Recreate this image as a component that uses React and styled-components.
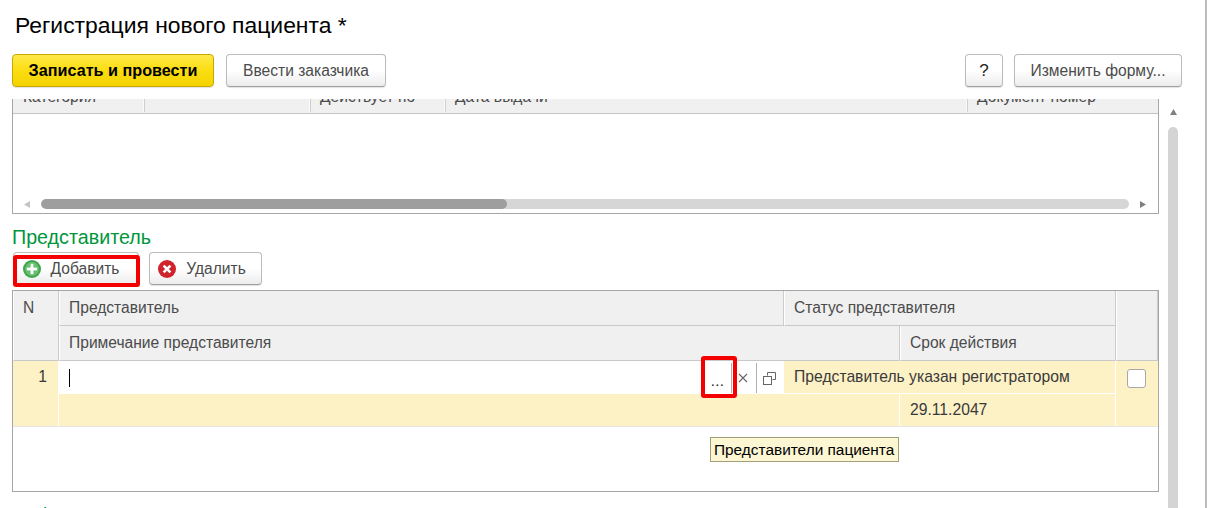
import React from "react";
import styled, { createGlobalStyle } from "styled-components";

const Global = createGlobalStyle`
  html, body {
    margin: 0;
    padding: 0;
    background: #fff;
    overflow: hidden;
    font-family: "Liberation Sans", Arial, sans-serif;
  }
  * { box-sizing: border-box; }
`;

const Window = styled.div`
  width: 1207px;
  height: 508px;
  overflow: hidden;
  display: flex;
  border-right: 2px solid #bcbcbc;
`;

const Main = styled.div`
  width: 1158px;
  margin-left: 12px;
  flex: none;
`;

const Title = styled.h1`
  margin: 0;
  height: 54px;
  padding: 12px 0 0 3px;
  font-size: 22.9px;
  line-height: 26px;
  font-weight: 400;
  color: #000;
`;

const Toolbar = styled.div`
  display: flex;
  gap: ${(p) => p.$gap || 12}px;
  height: 33px;
  width: ${(p) => p.$width || 1170}px;
`;

const Spacer = styled.div`
  flex: 1;
`;

const Button = styled.div`
  height: 33px;
  width: ${(p) => p.$width}px;
  flex: none;
  display: flex;
  align-items: center;
  justify-content: center;
  gap: ${(p) => p.$iconGap || 0}px;
  padding-right: ${(p) => p.$shift || 0}px;
  border: 1px solid #bcbcbc;
  border-bottom-color: #a0a0a0;
  border-radius: 4px;
  background: linear-gradient(#ffffff 0%, #ffffff 50%, #ececec 100%);
  box-shadow: 0 1px 1px rgba(0, 0, 0, 0.12);
  font-size: 15.6px;
  color: #4b4b4b;
  white-space: nowrap;
`;

const PrimaryButton = styled(Button)`
  border-color: #c8a900;
  background: linear-gradient(#ffe94a 0%, #fbdd10 50%, #f3d200 100%);
  color: #000;
  font-size: 16.2px;
  font-weight: 700;
`;

const HelpButton = styled(Button)`
  margin-right: -1px;
  color: #222;
  font-size: 17px;
`;

const Table = styled.div`
  width: 1147px;
  height: ${(p) => p.$height}px;
  border: 1px solid #a6a6a6;
  background: #fff;
`;

const ClippedTable = styled(Table)`
  margin-top: 12px;
  border-top: 0;
  display: flex;
  flex-direction: column;
`;

const ClippedHead = styled.div`
  display: grid;
  grid-template-columns: 131px 166px 135px 522px 1fr;
  height: 15px;
  background: #f0f0f0;
  border-bottom: 1px solid #c4c4c4;
  overflow: hidden;
`;

const ClippedCell = styled.div`
  height: 23px;
  border-right: ${(p) => (p.$last ? "0" : "1px solid #fafafa")};
  box-shadow: ${(p) => (p.$last ? "none" : "1px 0 0 #cfcfcf")};
  padding-left: 10px;
  font-size: 15.6px;
  line-height: 16px;
  color: #4b4b4b;
  white-space: nowrap;
  transform: translateY(-10px);
`;

const TableFill = styled.div`
  flex: 1;
`;

const HScroll = styled.div`
  height: 23px;
  display: flex;
  align-items: center;
  padding: 5px 0 0 7px;
`;

const ArrowBox = styled.div`
  width: 12px;
  flex: none;
  display: flex;
  justify-content: center;
`;

const ScrollTrack = styled.div`
  width: 1088px;
  margin: 0 7px 0 9px;
  height: 10px;
  border-radius: 5px;
  background: #d6d6d6;
  overflow: hidden;
`;

const ScrollThumb = styled.div`
  height: 10px;
  border-radius: 5px;
  background: #9e9e9e;
`;

const Section = styled.div`
  height: 23px;
  margin-top: 12px;
  font-size: 19.7px;
  line-height: 23px;
  color: #00963c;
  white-space: nowrap;
`;

const CommandBar = styled(Toolbar)`
  margin: 3px 0 5px 1px;
`;

const Highlighted = styled.div`
  position: relative;
`;

const RedFrame = styled.div`
  position: absolute;
  border: 4px solid #f40000;
  border-radius: 3px;
  pointer-events: none;
  left: ${(p) => p.$left}px;
  top: ${(p) => p.$top}px;
  width: ${(p) => p.$width}px;
  height: ${(p) => p.$height}px;
`;

const Grid = styled.div`
  display: grid;
  grid-template-columns: 46px 725px 116px 216px 1fr;
  grid-template-rows: 35px 35px 33px 32px;
  border-bottom: 1px solid #e6e6e6;
`;

const HeadCell = styled.div`
  grid-column: ${(p) => p.$col};
  grid-row: ${(p) => p.$row};
  background: #f0f0f0;
  border-left: 1px solid #fff;
  border-right: 1px solid #cbcbcb;
  border-bottom: 1px solid #c8c8c8;
  padding: 9px 0 0 9px;
  font-size: 15.6px;
  line-height: 16px;
  color: #4b4b4b;
  white-space: nowrap;
`;

const RowCell = styled.div`
  grid-column: ${(p) => p.$col};
  grid-row: ${(p) => p.$row};
  background: #fdf1c6;
  border-right: ${(p) => (p.$flush ? "0" : "1px solid #fff")};
  border-bottom: ${(p) => (p.$line ? "1px solid #fff" : "0")};
  padding: 8px 0 0 10px;
  font-size: 15.7px;
  line-height: 16px;
  color: #3a3a3a;
  white-space: nowrap;
`;

const NumberCell = styled(RowCell)`
  padding: 8px 11px 0 0;
  text-align: right;
`;

const CheckCell = styled(RowCell)`
  padding: 8px 0 0 11px;
`;

const CheckBox = styled.div`
  width: 19px;
  height: 19px;
  background: #fff;
  border: 1px solid #a8a8a8;
  border-radius: 3px;
`;

const Input = styled.div`
  grid-column: ${(p) => p.$col};
  grid-row: ${(p) => p.$row};
  background: #fff;
  display: flex;
  align-items: stretch;
  padding: 2px 0 1px 10px;
  height: 33px;
`;

const Caret = styled.div`
  width: 1px;
  height: 18px;
  margin-top: 6px;
  background: #000;
`;

const InputGrow = styled.div`
  flex: 1;
`;

const InputBtn = styled.div`
  width: ${(p) => p.$width}px;
  flex: none;
  border-right: ${(p) => (p.$sep ? "1px solid #b0b0b0" : "0")};
  padding-right: ${(p) => p.$shift || 0}px;
  display: flex;
  align-items: center;
  justify-content: center;
  color: #555;
`;

const Dots = styled.span`
  font-size: 15px;
  line-height: 14px;
  letter-spacing: 0.3px;
  margin: 5px 0 0 5px;
  color: #222;
`;

const Tooltip = styled.div`
  position: absolute;
  left: 698px;
  top: 147px;
  width: 189px;
  height: 25px;
  background: #fdf6d3;
  border: 1px solid #a09f7a;
  font-size: 15.4px;
  line-height: 23px;
  padding-left: 3px;
  color: #000;
  white-space: nowrap;
`;

const VScroll = styled.div`
  width: 10px;
  margin: 99px 0 0 -2px;
  flex: none;
  display: flex;
  flex-direction: column;
  align-items: center;
`;

const VArrow = styled.div`
  height: 28px;
  display: flex;
  padding-top: 10px;
`;

const VThumb = styled.div`
  width: 10px;
  flex: 1;
  background: #d4d4d4;
  border-radius: 5px 5px 0 0;
`;

const NextSection = styled(Section)`
  margin-top: 12px;
`;

const Arrow = ({ dir, color = "#9a9a9a" }) => {
  const points = {
    left: "7,0 7,7 1,3.5",
    right: "1,0 1,7 7,3.5",
    up: "0,6 7,6 3.5,0",
  }[dir];
  return (
    <svg width="7" height="7" viewBox="0 0 7 7">
      <polygon points={points} fill={color} />
    </svg>
  );
};

const PlusIcon = () => (
  <svg width="18" height="18" viewBox="0 0 18 18">
    <circle cx="9" cy="9" r="9" fill="#3fa64a" />
    <circle cx="9" cy="9" r="7" fill="#66c06c" />
    <rect x="3.8" y="7.6" width="10.4" height="2.8" fill="#fff" />
    <rect x="7.6" y="3.8" width="2.8" height="10.4" fill="#fff" />
  </svg>
);

const RemoveIcon = () => (
  <svg width="18" height="18" viewBox="0 0 18 18">
    <circle cx="9" cy="9" r="9" fill="#d0242c" />
    <path d="M5.6 5.6l6.8 6.8M12.4 5.6l-6.8 6.8" stroke="#fff" strokeWidth="2.6" />
  </svg>
);

const ClearIcon = () => (
  <svg width="10" height="10" viewBox="0 0 10 10">
    <path d="M1 1l8 8M9 1l-8 8" stroke="#666" strokeWidth="1.1" fill="none" />
  </svg>
);

const OpenIcon = () => (
  <svg width="13" height="13" viewBox="0 0 13 13" fill="none" stroke="#666">
    <path d="M4.5 3.5V.5h8v7h-3" />
    <rect x="0.5" y="4.5" width="8" height="8" fill="#fff" />
  </svg>
);

export default function App() {
  return (
    <Window>
      <Global />
      <Main>
        <Title>Регистрация нового пациента *</Title>
        <Toolbar>
          <PrimaryButton $width={202}>Записать и провести</PrimaryButton>
          <Button $width={160}>Ввести заказчика</Button>
          <Spacer />
          <HelpButton $width={38}>?</HelpButton>
          <Button $width={168}>Изменить форму...</Button>
        </Toolbar>

        <ClippedTable $height={115}>
          <ClippedHead>
            <ClippedCell>Категория</ClippedCell>
            <ClippedCell />
            <ClippedCell>Действует по</ClippedCell>
            <ClippedCell>Дата выдачи</ClippedCell>
            <ClippedCell $last>Документ номер</ClippedCell>
          </ClippedHead>
          <TableFill />
          <HScroll>
            <ArrowBox><Arrow dir="left" color="#c4c4c4" /></ArrowBox>
            <ScrollTrack>
              <ScrollThumb style={{ width: `${(466 / 1088) * 100}%` }} />
            </ScrollTrack>
            <ArrowBox><Arrow dir="right" color="#808080" /></ArrowBox>
          </HScroll>
        </ClippedTable>

        <Section>Представитель</Section>
        <CommandBar $gap={10}>
          <Highlighted>
            <Button $width={126} $iconGap={10} $shift={10}><PlusIcon />Добавить</Button>
            <RedFrame $left={0} $top={3} $width={127} $height={32} />
          </Highlighted>
          <Button $width={113} $iconGap={10} $shift={7}><RemoveIcon />Удалить</Button>
        </CommandBar>

        <Highlighted>
          <Table $height={202}>
            <Grid>
              <HeadCell $col="1" $row="1 / 3">N</HeadCell>
              <HeadCell $col="2" $row="1">Представитель</HeadCell>
              <HeadCell $col="3 / 5" $row="1">Статус представителя</HeadCell>
              <HeadCell $col="5" $row="1 / 3" />
              <HeadCell $col="2 / 4" $row="2">Примечание представителя</HeadCell>
              <HeadCell $col="4" $row="2">Срок действия</HeadCell>

              <NumberCell $col="1" $row="3 / 5">1</NumberCell>
              <Input $col="2" $row="3">
                <Caret />
                <InputGrow />
                <InputBtn $width={33} $sep><Dots>...</Dots></InputBtn>
                <InputBtn $width={25} $sep $shift={2}><ClearIcon /></InputBtn>
                <InputBtn $width={27} $shift={3}><OpenIcon /></InputBtn>
              </Input>
              <RowCell $col="3 / 5" $row="3" $line>Представитель указан регистратором</RowCell>
              <CheckCell $col="5" $row="3 / 5" $flush><CheckBox /></CheckCell>
              <RowCell $col="2 / 4" $row="4" />
              <RowCell $col="4" $row="4">29.11.2047</RowCell>
            </Grid>
          </Table>
          <RedFrame $left={689} $top={66} $width={36} $height={42} />
          <Tooltip>Представители пациента</Tooltip>
        </Highlighted>

        <NextSection>Информация</NextSection>
      </Main>
      <VScroll>
        <VArrow><Arrow dir="up" color="#808080" /></VArrow>
        <VThumb />
      </VScroll>
    </Window>
  );
}
